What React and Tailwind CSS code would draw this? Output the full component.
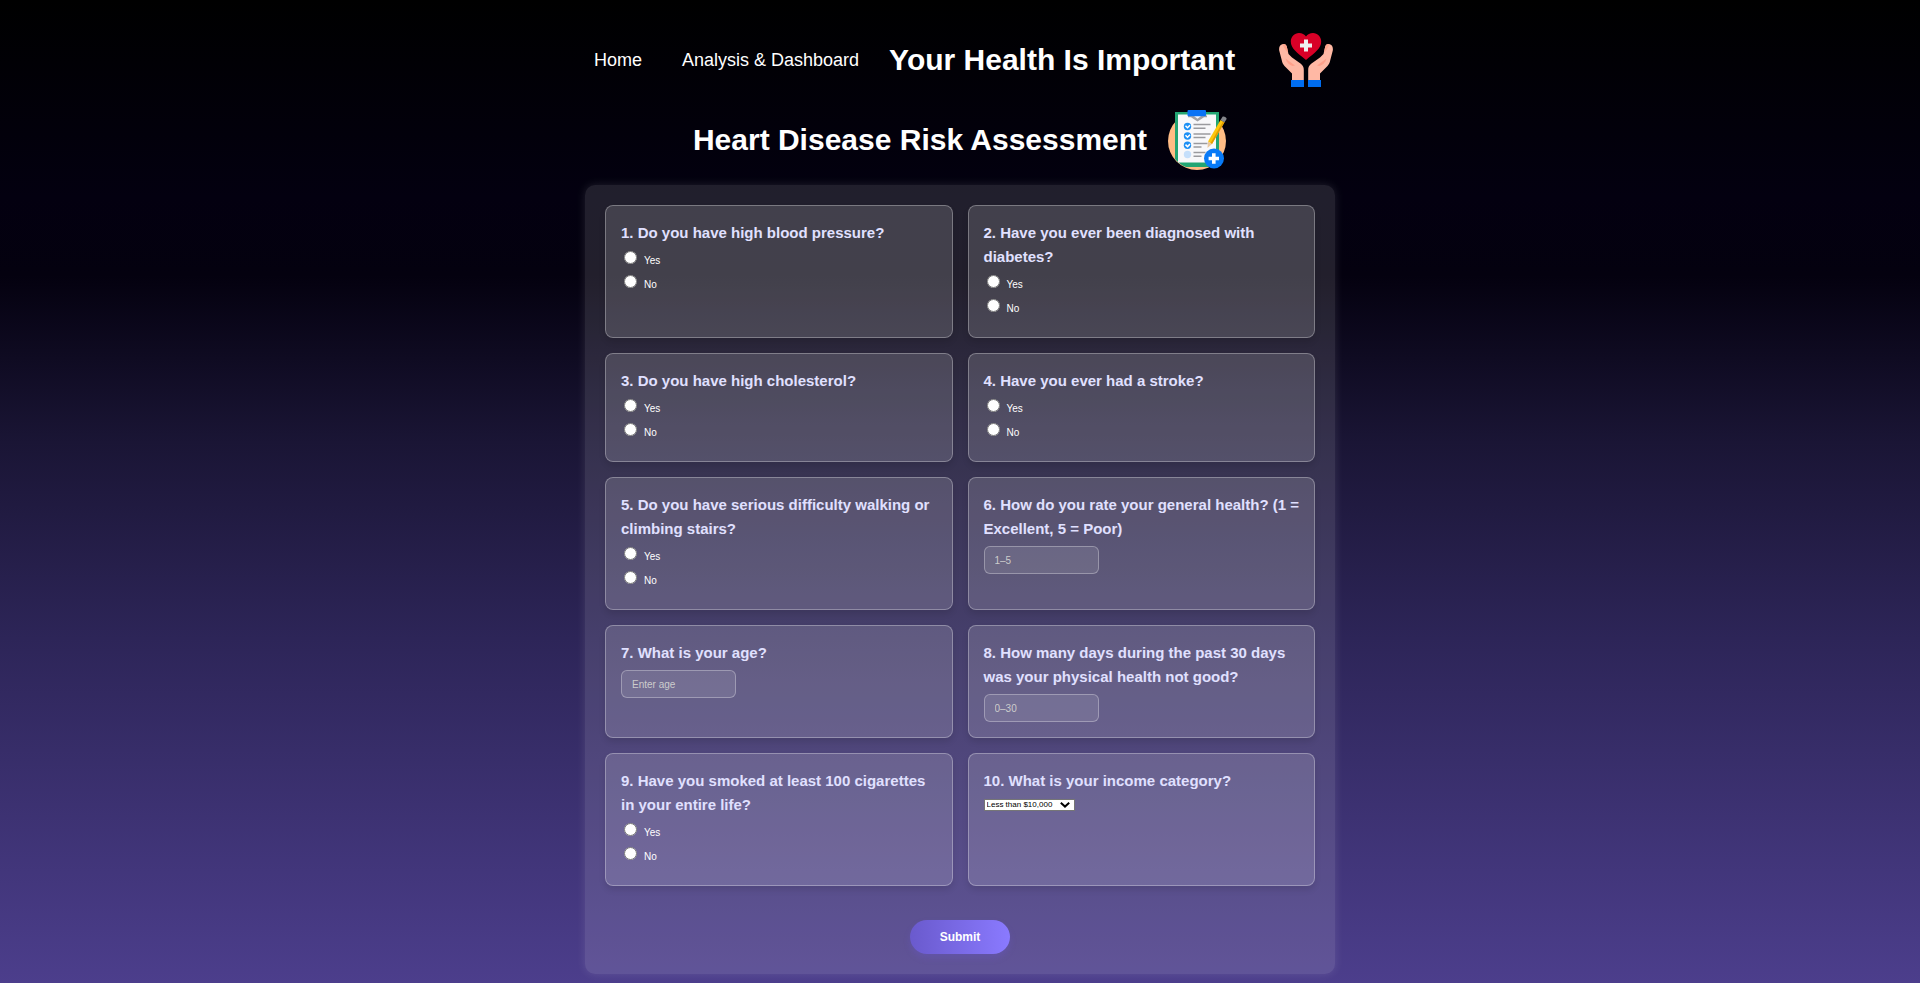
const questions = [
  { id: 'bp', text: '1. Do you have high blood pressure?', type: 'radio' },
  { id: 'diabetes', text: '2. Have you ever been diagnosed with diabetes?', type: 'radio' },
  { id: 'chol', text: '3. Do you have high cholesterol?', type: 'radio' },
  { id: 'stroke', text: '4. Have you ever had a stroke?', type: 'radio' },
  { id: 'walk', text: '5. Do you have serious difficulty walking or climbing stairs?', type: 'radio' },
  { id: 'general', text: '6. How do you rate your general health? (1 = Excellent, 5 = Poor)', type: 'number', placeholder: '1–5' },
  { id: 'age', text: '7. What is your age?', type: 'number', placeholder: 'Enter age' },
  { id: 'phys', text: '8. How many days during the past 30 days was your physical health not good?', type: 'number', placeholder: '0–30' },
  { id: 'smoke', text: '9. Have you smoked at least 100 cigarettes in your entire life?', type: 'radio' },
  { id: 'income', text: '10. What is your income category?', type: 'select' },
];

const incomes = ['Less than $10,000', '$10,000–$15,000', '$15,000–$20,000', '$20,000–$25,000', '$25,000–$35,000', '$35,000–$50,000', '$50,000–$75,000', '$75,000 or more'];

const cardClass = 'rounded-lg border border-white/30 bg-white/15 p-[15px] shadow-[0_4px_6px_rgba(0,0,0,0.1)]';
const titleClass = 'mb-[5px] block text-[15px] leading-6 font-bold text-[#e0e0ff]';

function HandsIcon() {
  return (
    <svg viewBox="0 0 54 54" className="size-[54px] shrink-0" aria-hidden="true">
      <path d="M27 27C18 19.500 11.800 15.500 11.800 8.500C11.800 3.800 15.500 0 20 0C23 0 25.500 1.300 27 3.500C28.500 1.300 31 0 34 0C38.500 0 42.200 3.800 42.200 8.500C42.200 15.500 36 19.500 27 27Z" fill="#d80027" />
      <path d="M25 6.500h4v4h4v4h-4v4h-4v-4h-4v-4h4z" fill="#eee" />
      <g id="hand">
        <path d="M3.500 11.200C6 10.800 7.600 12 8 14.500L9.500 21L13 24.500L21.500 30.500C24 32.500 24.800 34 24.800 37V47.500H13V40.500L5.500 33C3.800 31 3.200 29.500 2.700 27L.2 17.500C-.3 14 1 11.600 3.500 11.200Z" fill="#ffb8a4" />
        <path d="M3.500 11.200C6 10.800 7.600 12 8 14.500L9 19C7 18.500 5.500 15 3.500 11.200Z" fill="#ffa48c" />
        <path d="M6.500 25.500L16 32.500L13.500 33C10.500 32 7.500 29.500 6.500 25.500Z" fill="#ffa08a" />
        <path d="M12 47h13v7H12z" fill="#006df0" />
      </g>
      <use href="#hand" transform="matrix(-1 0 0 1 54 0)" />
    </svg>
  );
}

function ClipboardIcon() {
  return (
    <svg viewBox="0 0 60 60" className="size-15 shrink-0" aria-hidden="true">
      <circle cx="30" cy="31" r="29" fill="#ffbc85" />
      <path d="M8 2h44v50L45 57H19Q12 54 8 49z" fill="#22a573" />
      <path d="M11 4.500h38v48H11z" fill="#f8f8fa" />
      <path d="M21 5.500h19v1.800h-3l-3 2-3.500 2.200-3.500-2.200-3-2h-3z" fill="#a2a2a6" />
      <path d="M27 6h7l-3.500 2.700z" fill="#f8f8fa" />
      <rect x="20.500" y="0" width="18.500" height="6.200" rx="1" fill="#0a73f5" />
      <g fill="#1c90f5"><circle cx="20.500" cy="16.500" r="3.700" /><circle cx="20.500" cy="26" r="3.700" /><circle cx="20.500" cy="35.300" r="3.700" /></g>
      <circle cx="20.500" cy="44.500" r="3.700" fill="#c5dffb" />
      <g fill="none" stroke="#fff" strokeWidth="1.500"><path d="M18.500 15.800l2 2 2.500-2.500M18.500 25.300l2 2 2.500-2.500M18.500 34.600l2 2 2.500-2.500" /></g>
      <path d="M26.500 14.500h17M26.500 18.200h12M26.500 24h17M26.500 27.500h12M26.500 33.500h14M26.500 37h8M26.500 42.500h12M26.500 46.200h8" stroke="#9a9a9e" strokeWidth="1.400" />
      <path d="M41 31.500L53.500 10l4 2.300L45 34z" fill="#fdc70c" />
      <path d="M43.500 33.200L56 11.500l1.500.8L45 34z" fill="#e39b00" />
      <path d="M41 31.500L45 34l-4.500 4z" fill="#e9c79d" />
      <path d="M53.500 10l2-3.200c1-1.300 4.800.7 4 2.400l-2 3.100z" fill="#85868b" />
      <circle cx="47" cy="48.500" r="10" fill="#087af7" />
      <path d="M45 43.300h3.600v3.400h3.400v3.600h-3.400v3.400H45v-3.400h-3.400v-3.600H45z" fill="#fff" />
    </svg>
  );
}

function Question({ q }) {
  if (q.type === 'radio') {
    return (
      <fieldset className={cardClass}>
        <legend className={`${titleClass} float-left w-full`}>{q.text}</legend>
        <div className="clear-both">
          {['Yes', 'No'].map((option) => (
            <label key={option} className="flex h-6 w-fit items-start gap-[7px] pl-[3px] text-[10px] leading-[22px] text-white">
              <input type="radio" name={q.id} value={option} className="mt-px size-[13px]" />
              {option}
            </label>
          ))}
        </div>
      </fieldset>
    );
  }
  return (
    <div className={cardClass}>
      <label htmlFor={q.id} className={titleClass}>{q.text}</label>
      {q.type === 'number' ? (
        <input
          id={q.id}
          type="number"
          placeholder={q.placeholder}
          className="block h-7 w-[115px] rounded-md border border-white/30 bg-white/10 px-[10px] text-[10px] text-white placeholder:text-[#cccccc]"
        />
      ) : (
        <div className="relative mt-[6px] w-[91px]">
          <select id={q.id} className="block h-3 w-full appearance-none border border-[#767676] bg-white pl-[2px] text-[8px] leading-[10px] text-black">
            {incomes.map((income) => (
              <option key={income}>{income}</option>
            ))}
          </select>
          <svg viewBox="0 0 10 6" className="pointer-events-none absolute top-[3px] right-[5px] h-[6px] w-[10px]" aria-hidden="true">
            <path d="M.8 .8L5 4.600L9.200 .8" fill="none" stroke="#000" strokeWidth="2" />
          </svg>
        </div>
      )}
    </div>
  );
}

export default function App() {
  return (
    <div className="min-h-screen bg-[linear-gradient(to_bottom,#000000_0%,#030010_20%,#04010f_28%,#1a1535_45%,#2d2558_65%,#4c3e8c_100%)] pt-8 pb-2 font-['Liberation_Sans',Arial,sans-serif] text-white">
      <div className="mx-auto max-w-[750px]">
        <header className="flex h-14 items-center pl-[9px]">
          <nav className="flex gap-10 text-lg">
            <a href="#home">Home</a>
            <a href="#dashboard">Analysis &amp; Dashboard</a>
          </nav>
          <h2 className="ml-[30px] flex-1 text-[30px] leading-9 font-bold whitespace-nowrap">Your Health Is Important</h2>
          <div className="pr-[2px]">
            <HandsIcon />
          </div>
        </header>
        <div className="mt-[22px] mb-[15px] flex items-center justify-center gap-5">
          <h1 className="text-[30px] leading-9 font-bold">Heart Disease Risk Assessment</h1>
          <ClipboardIcon />
        </div>
        <form className="rounded-[10px] bg-white/12 p-5 shadow-[0_0_10px_rgba(255,255,255,0.12)]">
          <div className="grid grid-cols-2 gap-[15px]">
            {questions.map((q) => (
              <Question key={q.id} q={q} />
            ))}
          </div>
          <div className="mt-[34px] flex justify-center">
            <button type="button" className="h-[34px] w-[100px] rounded-full bg-linear-to-r from-[#6a5acd] to-[#8a7aff] text-xs font-bold text-white shadow-[0_4px_6px_rgba(106,90,205,0.3)]">
              Submit
            </button>
          </div>
        </form>
      </div>
    </div>
  );
}
